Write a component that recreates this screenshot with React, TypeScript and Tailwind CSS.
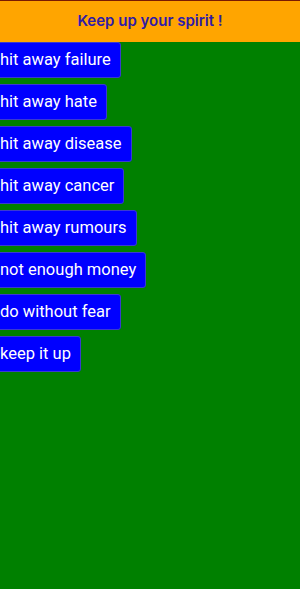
const ITEMS = [
  'hit away failure',
  'hit away hate',
  'hit away disease',
  'hit away cancer',
  'hit away rumours',
  'not enough money',
  'do without fear',
  'keep it up',
];

export default function App() {
  return (
    <div className="w-[300px] h-[589px] bg-[#008000] overflow-hidden" style={{ fontFamily: 'Roboto, "Noto Sans", sans-serif' }}>
      {/* Header */}
      <div className="h-[42px] bg-[#ffa500] border-t border-[#7a1a00] flex items-center justify-center">
        <span className="text-[15px] font-semibold text-[#2f1ba8]" style={{ fontFamily: 'Inter, Roboto, sans-serif' }}>
          Keep up your spirit !
        </span>
      </div>

      {/* Buttons */}
      <div className="flex flex-col items-start gap-[6px] -ml-[13px]">
        {ITEMS.map((item) => (
          <button
            key={item}
            className="h-[36px] pl-[12px] pr-[9px] bg-[#0000ff] text-white text-[16.5px] rounded-[3px] border border-[#3a3ad0] leading-none"
          >
            {item}
          </button>
        ))}
      </div>
    </div>
  );
}
